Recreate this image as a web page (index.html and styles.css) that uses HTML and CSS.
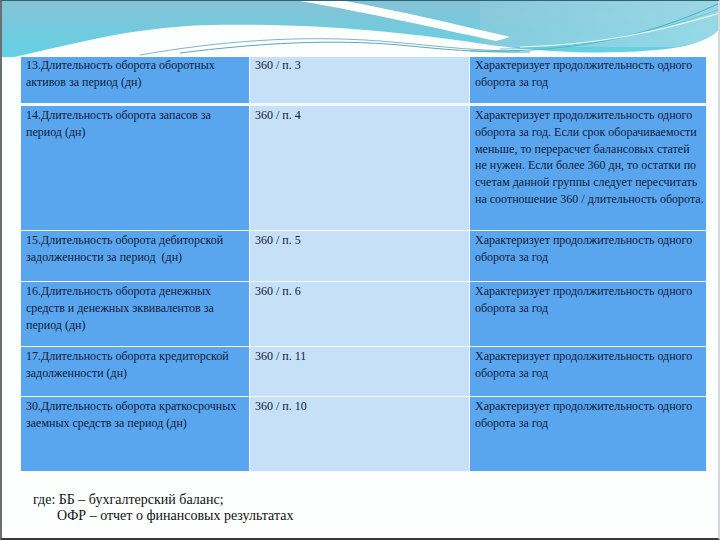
FILE: index.html
```html
<!DOCTYPE html>
<html lang="ru">
<head>
<meta charset="utf-8">
<title>Показатели оборачиваемости</title>
<link rel="stylesheet" href="styles.css">
</head>
<body>
<div class="slide">
  <div class="header">
    <svg class="wave" viewBox="0 0 720 56" width="720" height="56" preserveAspectRatio="none">
      <defs>
        <linearGradient id="tealg" x1="0" y1="0" x2="0" y2="1">
          <stop offset="0" stop-color="#86c2d6"/>
          <stop offset="1" stop-color="#62d2e4"/>
        </linearGradient>
        <linearGradient id="tealr" x1="0" y1="0" x2="1" y2="0">
          <stop offset="0" stop-color="#8ccbdd"/>
          <stop offset="1" stop-color="#a6dfea"/>
        </linearGradient>
      </defs>
      <rect x="0" y="0" width="720" height="56" fill="url(#tealg)"/>
      <rect x="480" y="0" width="240" height="46" fill="url(#tealr)" opacity="0.7"/>
      <path d="M0,56 L14,56 C70,44 130,26 210,24 C320,22 410,32 490,44 C560,53 630,54 680,46 C700,42 712,36 720,28 L720,56 Z" fill="#fdfefe"/>
      <path d="M300,0 L345,0 C400,10 450,22 510,36 L496,40 C440,28 370,12 300,0 Z" fill="#fdfefe"/>
      <path d="M140,54 C220,40 300,34 380,40 C430,44 470,50 520,50" fill="none" stroke="#7fb6c6" stroke-width="1"/>
      <path d="M180,52 C260,42 330,38 400,44 C440,48 480,52 530,51" fill="none" stroke="#5ea6b6" stroke-width="1"/>
      <path d="M470,50 C560,52 640,40 720,2" fill="none" stroke="#4fb8c8" stroke-width="1.2"/>
      <path d="M500,48 C580,48 650,34 720,8" fill="none" stroke="#6fc8d6" stroke-width="1"/>
      <path d="M520,46 C600,44 660,30 720,12" fill="none" stroke="#e8f7fa" stroke-width="1.2"/>
    </svg>
  </div>
  <table class="grid">
    <colgroup>
      <col class="c1"><col class="c2"><col class="c3">
    </colgroup>
    <tr class="r1">
      <td class="dark">13.Длительность оборота оборотных<br>активов за период (дн)</td>
      <td class="light">360 / п. 3</td>
      <td class="dark">Характеризует продолжительность одного<br>оборота за год</td>
    </tr>
    <tr class="r2">
      <td class="dark">14.Длительность оборота запасов за<br>период (дн)</td>
      <td class="light">360 / п. 4</td>
      <td class="dark">Характеризует продолжительность одного<br>оборота за год. Если срок оборачиваемости<br>меньше, то перерасчет балансовых статей<br>не нужен. Если более 360 дн, то остатки по<br>счетам данной группы следует пересчитать<br>на соотношение 360 / длительность оборота.</td>
    </tr>
    <tr class="r3">
      <td class="dark">15.Длительность оборота дебиторской<br>задолженности за период&nbsp; (дн)</td>
      <td class="light">360 / п. 5</td>
      <td class="dark">Характеризует продолжительность одного<br>оборота за год</td>
    </tr>
    <tr class="r4">
      <td class="dark">16.Длительность оборота денежных<br>средств и денежных эквивалентов за<br>период (дн)</td>
      <td class="light">360 / п. 6</td>
      <td class="dark">Характеризует продолжительность одного<br>оборота за год</td>
    </tr>
    <tr class="r5">
      <td class="dark">17.Длительность оборота кредиторской<br>задолженности (дн)</td>
      <td class="light">360 / п. 11</td>
      <td class="dark">Характеризует продолжительность одного<br>оборота за год</td>
    </tr>
    <tr class="r6">
      <td class="dark">30.Длительность оборота краткосрочных<br>заемных средств за период (дн)</td>
      <td class="light">360 / п. 10</td>
      <td class="dark">Характеризует продолжительность одного<br>оборота за год</td>
    </tr>
  </table>
  <div class="note">
    <div class="note-line">где: ББ – бухгалтерский баланс;</div>
    <div class="note-line indent">ОФР – отчет о финансовых результатах</div>
  </div>
</div>
</body>
</html>
```

FILE: styles.css
```css
html, body {
  margin: 0;
  padding: 0;
  background: #ffffff;
}

.slide {
  box-sizing: border-box;
  width: 720px;
  height: 540px;
  overflow: hidden;
  background: #fdfefe;
  border-top: 1px solid #2b6678;
  border-left: 2px solid #6a6f72;
  border-right: 2px solid #d6d9db;
  border-bottom: 2px solid #3a3a3a;
  font-family: "Liberation Serif", "Times New Roman", serif;
}

.header {
  height: 54px;
  margin-left: -2px;
}

.wave {
  display: block;
}

.grid {
  margin-left: 18px;
  border-collapse: collapse;
  table-layout: fixed;
  width: 686px;
}

.c1 { width: 229px; }
.c2 { width: 220px; }
.c3 { width: 237px; }

.grid td {
  box-sizing: border-box;
  vertical-align: top;
  padding: 1px 2px 0 5px;
  font-family: "Liberation Serif", "Times New Roman", serif;
  font-size: 12px;
  line-height: 16.8px;
  color: #111a3a;
  border: 1px solid #f4f9fd;
  white-space: nowrap;
  overflow: hidden;
}

.grid .dark {
  background: #5aa6ee;
}

.grid .light {
  background: #c6e0f8;
}

.r1 { height: 49px; }
.r1 td { border-bottom-width: 3px; }
.r2 { height: 126px; }
.r3 { height: 51px; }
.r4 { height: 65px; }
.r5 { height: 50px; }
.r6 { height: 75px; }

.note {
  padding: 20px 0 0 31px;
  font-family: "Liberation Serif", "Times New Roman", serif;
  font-size: 14px;
  line-height: 16px;
  color: #111111;
}

.indent {
  padding-left: 24px;
}
```
